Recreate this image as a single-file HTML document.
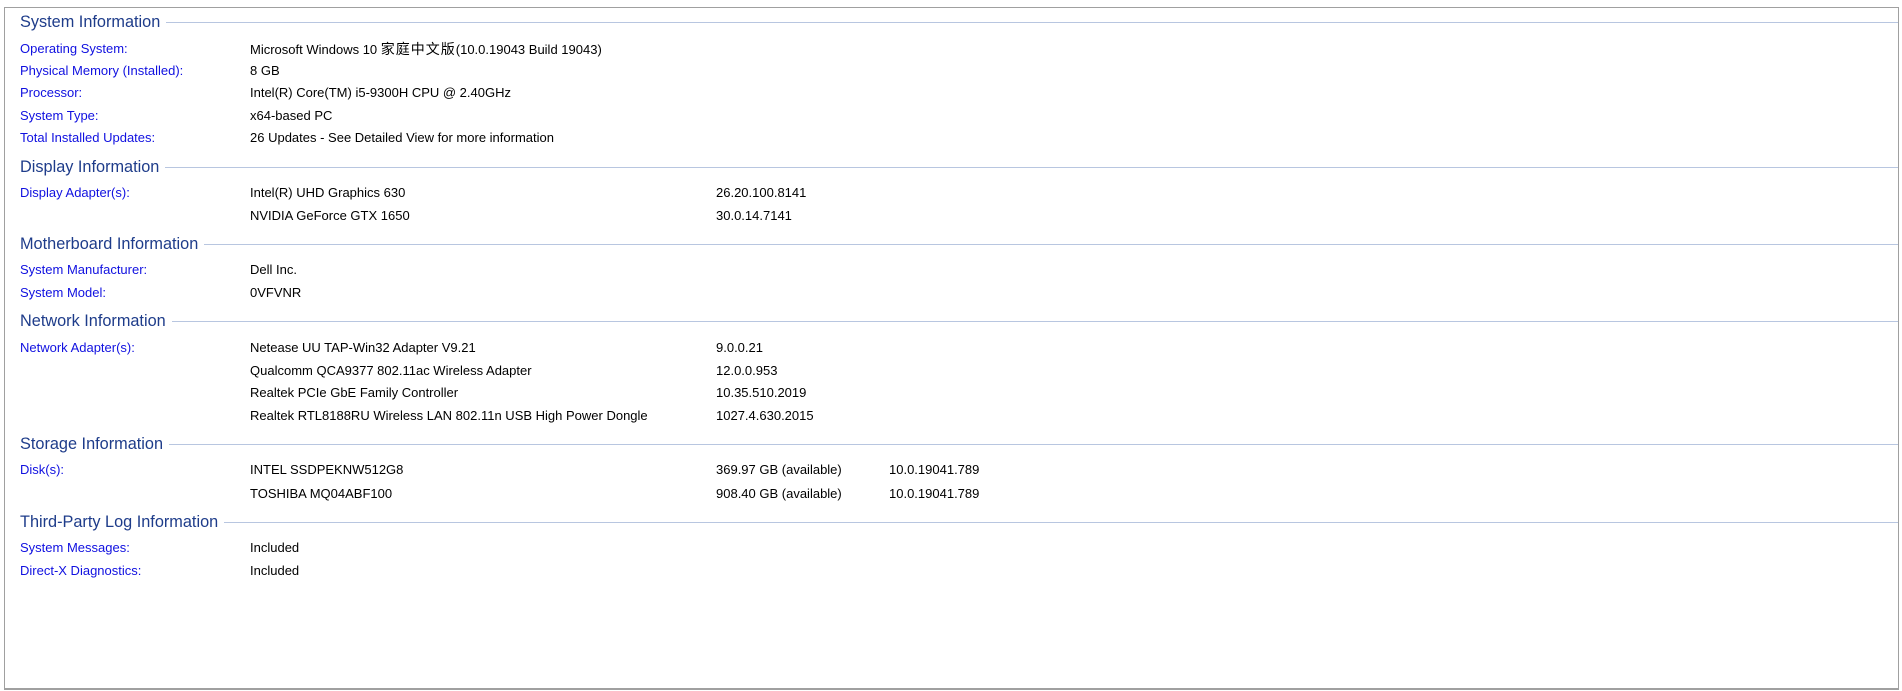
<!DOCTYPE html>
<html><head><meta charset="utf-8"><style>
html,body{margin:0;padding:0;width:1902px;height:691px;background:#fff;overflow:hidden;font-family:"Liberation Sans","Noto Sans CJK SC",sans-serif;}
#frame{position:absolute;left:4px;top:7px;width:1893px;height:680px;border:1px solid #a0a0a0;border-bottom:2px solid #a0a0a0;background:#fff;}
.h{position:absolute;left:20px;right:4px;height:20px;display:flex;align-items:center;font-size:16.3px;color:#1e3c8a;}
.h span{white-space:nowrap;padding-right:6px}
.h i{flex:1;height:1px;background:#b8c6e0;}
.r{position:absolute;font-size:13px;line-height:16px;white-space:nowrap;}
.l{left:20px;color:#1010e0;}
.v{left:250px;color:#000}
.c3{left:716px;color:#000}
.c4{left:889px;color:#000}
.cjk{font-size:14px;letter-spacing:1px}
</style></head><body>
<div id="frame"></div>
<div class="h" style="top:12px"><span>System Information</span><i></i></div>
<div class="r l" style="top:41px">Operating System:</div><div class="r v" style="top:41px">Microsoft Windows 10 <span class="cjk">家庭中文版</span>(10.0.19043 Build 19043)</div>
<div class="r l" style="top:63px">Physical Memory (Installed):</div><div class="r v" style="top:63px">8 GB</div>
<div class="r l" style="top:85px">Processor:</div><div class="r v" style="top:85px">Intel(R) Core(TM) i5-9300H CPU @ 2.40GHz</div>
<div class="r l" style="top:108px">System Type:</div><div class="r v" style="top:108px">x64-based PC</div>
<div class="r l" style="top:130px">Total Installed Updates:</div><div class="r v" style="top:130px">26 Updates - See Detailed View for more information</div>

<div class="h" style="top:157px"><span>Display Information</span><i></i></div>
<div class="r l" style="top:185px">Display Adapter(s):</div><div class="r v" style="top:185px">Intel(R) UHD Graphics 630</div><div class="r c3" style="top:185px">26.20.100.8141</div>
<div class="r v" style="top:208px">NVIDIA GeForce GTX 1650</div><div class="r c3" style="top:208px">30.0.14.7141</div>

<div class="h" style="top:234px"><span>Motherboard Information</span><i></i></div>
<div class="r l" style="top:262px">System Manufacturer:</div><div class="r v" style="top:262px">Dell Inc.</div>
<div class="r l" style="top:285px">System Model:</div><div class="r v" style="top:285px">0VFVNR</div>

<div class="h" style="top:311px"><span>Network Information</span><i></i></div>
<div class="r l" style="top:340px">Network Adapter(s):</div><div class="r v" style="top:340px">Netease UU TAP-Win32 Adapter V9.21</div><div class="r c3" style="top:340px">9.0.0.21</div>
<div class="r v" style="top:363px">Qualcomm QCA9377 802.11ac Wireless Adapter</div><div class="r c3" style="top:363px">12.0.0.953</div>
<div class="r v" style="top:385px">Realtek PCIe GbE Family Controller</div><div class="r c3" style="top:385px">10.35.510.2019</div>
<div class="r v" style="top:408px">Realtek RTL8188RU Wireless LAN 802.11n USB High Power Dongle</div><div class="r c3" style="top:408px">1027.4.630.2015</div>

<div class="h" style="top:434px"><span>Storage Information</span><i></i></div>
<div class="r l" style="top:462px">Disk(s):</div><div class="r v" style="top:462px">INTEL SSDPEKNW512G8</div><div class="r c3" style="top:462px">369.97 GB (available)</div><div class="r c4" style="top:462px">10.0.19041.789</div>
<div class="r v" style="top:486px">TOSHIBA MQ04ABF100</div><div class="r c3" style="top:486px">908.40 GB (available)</div><div class="r c4" style="top:486px">10.0.19041.789</div>

<div class="h" style="top:512px"><span>Third-Party Log Information</span><i></i></div>
<div class="r l" style="top:540px">System Messages:</div><div class="r v" style="top:540px">Included</div>
<div class="r l" style="top:563px">Direct-X Diagnostics:</div><div class="r v" style="top:563px">Included</div>
</body></html>
